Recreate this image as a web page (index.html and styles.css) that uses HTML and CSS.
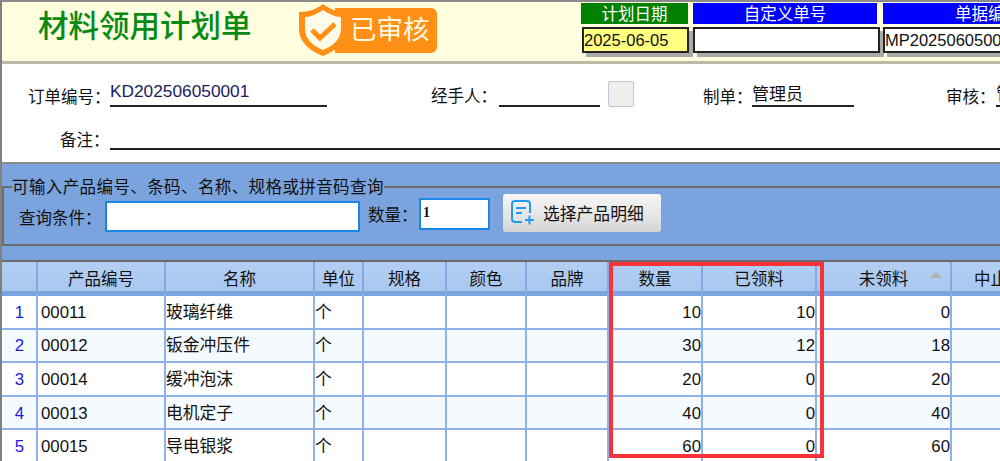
FILE: index.html
```html
<!DOCTYPE html>
<html lang="zh-CN">
<head>
<meta charset="utf-8">
<title>材料领用计划单</title>
<link rel="stylesheet" href="styles.css">
</head>
<body>
<div class="page">
  <header class="top">
    <h1 class="title">材料领用计划单</h1>
    <div class="badge">
      <svg class="shield" width="48" height="52" viewBox="0 0 48 52">
        <path d="M24 0C18 5 9 8 0 8V25C0 38 11 47 24 52C37 47 48 38 48 25V8C39 8 30 5 24 0Z" fill="#ff9015"/>
        <path d="M24 6C18 10 12 13 6 13V25C6 35 14 42 24 46C34 42 42 35 42 25V13C36 13 30 10 24 6Z" fill="#fffbe8"/>
        <path d="M13 26L21 34L36 20" fill="none" stroke="#ff9015" stroke-width="5"/>
      </svg>
      <span class="badge-text">已审核</span>
    </div>
    <div class="meta">
      <div class="meta-col date">
        <div class="meta-label green">计划日期</div>
        <div class="meta-box yellow">2025-06-05</div>
      </div>
      <div class="meta-col custom">
        <div class="meta-label">自定义单号</div>
        <div class="meta-box"></div>
      </div>
      <div class="meta-col docno">
        <div class="meta-label">单据编号</div>
        <div class="meta-box">MP202506050001</div>
      </div>
    </div>
  </header>

  <section class="form">
    <div class="form-row first">
      <span class="lbl lbl-order">订单编号：</span>
      <span class="val val-order">KD202506050001</span>
      <span class="lbl lbl-handler">经手人：</span>
      <span class="val val-handler"></span>
      <span class="check"></span>
      <span class="lbl lbl-maker">制单：</span>
      <span class="val val-maker">管理员</span>
      <span class="lbl lbl-audit">审核：</span>
      <span class="val val-audit">管理员</span>
    </div>
    <div class="form-row second">
      <span class="lbl lbl-note">备注：</span>
      <span class="val val-note"></span>
    </div>
  </section>

  <section class="search">
    <fieldset class="search-set">
      <legend class="search-legend">可输入产品编号、条码、名称、规格或拼音码查询</legend>
      <div class="search-row">
        <span class="lbl">查询条件：</span>
        <span class="field field-query"></span>
        <span class="lbl lbl-qty">数量：</span>
        <span class="field field-qty">1</span>
        <button class="pick" type="button">
          <svg width="24" height="26" viewBox="0 0 24 26" fill="none" stroke="#1f9bf0" stroke-width="2">
            <path d="M11 22H4C2 22 1 21 1 19V4C1 2 2 1 4 1H16C18 1 19 2 19 4V13"/>
            <path d="M5 8H15M5 13H11M14 20H23M18.5 15.500V24.500"/>
          </svg>
          <span>选择产品明细</span>
        </button>
      </div>
    </fieldset>
  </section>

  <div class="grid-wrap">
    <table class="grid">
      <colgroup>
        <col class="c0"><col class="c1"><col class="c2"><col class="c3"><col class="c4"><col class="c5"><col class="c6"><col class="c7"><col class="c8"><col class="c9"><col class="c10">
      </colgroup>
      <thead>
        <tr><th></th><th>产品编号</th><th>名称</th><th>单位</th><th>规格</th><th>颜色</th><th>品牌</th><th>数量</th><th>已领料</th><th class="sorted">未领料<i class="tri"></i></th><th>中止数量</th></tr>
      </thead>
      <tbody>
        <tr><td class="idx">1</td><td class="code">00011</td><td>玻璃纤维</td><td>个</td><td></td><td></td><td></td><td class="num">10</td><td class="num">10</td><td class="num">0</td><td></td></tr>
        <tr><td class="idx">2</td><td class="code">00012</td><td>钣金冲压件</td><td>个</td><td></td><td></td><td></td><td class="num">30</td><td class="num">12</td><td class="num">18</td><td></td></tr>
        <tr><td class="idx">3</td><td class="code">00014</td><td>缓冲泡沫</td><td>个</td><td></td><td></td><td></td><td class="num">20</td><td class="num">0</td><td class="num">20</td><td></td></tr>
        <tr><td class="idx">4</td><td class="code">00013</td><td>电机定子</td><td>个</td><td></td><td></td><td></td><td class="num">40</td><td class="num">0</td><td class="num">40</td><td></td></tr>
        <tr><td class="idx">5</td><td class="code">00015</td><td>导电银浆</td><td>个</td><td></td><td></td><td></td><td class="num">60</td><td class="num">0</td><td class="num">60</td><td></td></tr>
      </tbody>
    </table>
    <div class="red-box"></div>
  </div>
</div>
</body>
</html>
```
FILE: styles.css
```css
* { box-sizing: border-box; }
html, body { margin: 0; padding: 0; background: #fff; }
body { font-family: "Liberation Sans", "Noto Sans CJK SC", sans-serif; font-size: 16.500px; color: #111; }
.page { width: 1000px; height: 461px; overflow: hidden; border-left: 2px solid #808080; border-top: 2px solid #8a8a8a; display: flex; flex-direction: column; }

.top { height: 62px; flex: none; background: #ffffe0; border-bottom: 3px solid #bdb9a6; display: flex; align-items: flex-start; position: relative; }
.title { margin: 5px 0 2px 36px; width: 261px; flex: none; font-size: 30.500px; line-height: 38px; font-weight: 500; color: #0a8a14; white-space: nowrap; }
.badge { display: flex; align-items: center; margin-top: 2px; width: 138px; height: 52px; flex: none; }
.shield { flex: none; position: relative; z-index: 1; }
.badge-text { margin-left: -12px; height: 45px; width: 102px; flex: none; background: #ff9015; color: #fff8e0; border-radius: 0 6px 6px 0; font-size: 26.500px; line-height: 45px; padding-left: 15px; white-space: nowrap; }
.meta { margin-left: 144px; margin-top: 1px; display: flex; flex: none; }
.meta-col { flex: none; }
.date { width: 112px; }
.custom { width: 190px; }
.docno { width: 210px; }
.date .meta-label { width: 107px; }
.custom .meta-label { width: 184px; }
.meta-label { height: 21px; background: #0000ff; color: #fff; font-size: 16.500px; line-height: 23px; text-align: center; overflow: hidden; }
.meta-label.green { background: #008000; }
.meta-box { margin-top: 3px; height: 26px; background: #fff; border: 2px solid #222; box-shadow: 4px 4px 0 #aaa; font-size: 16.500px; line-height: 22px; color: #111; white-space: nowrap; overflow: hidden; }
.date .meta-box { margin-left: 1px; width: 107px; }
.custom .meta-box { width: 187px; }
.meta-box.yellow { background: #ffff80; }

.form { height: 100px; flex: none; border-bottom: 2px solid #8a8a8a; background: #fff; }
.form-row { display: flex; align-items: flex-end; white-space: nowrap; }
.first { height: 43px; }
.second { height: 43px; }
.lbl { flex: none; color: #111; }
.val { flex: none; border-bottom: 2px solid #222; height: 27px; line-height: 22px; }
.lbl-order { margin-left: 26px; width: 82px; line-height: 20px; }
.val-order { width: 217px; font-size: 17.300px; color: #1a2060; line-height: 22px; }
.lbl-handler { margin-left: 104px; width: 68px; line-height: 22px; }
.val-handler { width: 101px; }
.check { width: 26px; height: 26px; margin-left: 8px; background: #efefec; border: 1px solid #bcc8d8; border-radius: 2px; flex: none; }
.lbl-maker { margin-left: 69px; width: 49px; line-height: 20px; }
.val-maker { width: 102px; line-height: 30px; font-size: 17px; }
.lbl-audit { margin-left: 92px; width: 50px; line-height: 20px; }
.val-audit { width: 60px; line-height: 30px; font-size: 17px; }
.lbl-note { margin-left: 58px; width: 50px; line-height: 20px; }
.val-note { flex: 1; }

.search { height: 96px; flex: none; background: #7ba3dd; padding-top: 12px; }
.search-set { margin: 0 -2px 0 0; width: 1020px; padding: 0 0 0 15px; height: 70px; border: 2px solid #6b6b6b; border-right: 0; border-radius: 0; min-width: 0; }
.search-legend { padding: 0; margin-left: -7px; font-size: 16.500px; line-height: 22px; letter-spacing: 0.400px; color: #111; }
.search-row { display: flex; align-items: flex-start; margin-top: -3px; }
.search-row .lbl { margin-top: 11px; line-height: 24px; width: 86px; }
.field { flex: none; display: block; background: #fff; border: 2px solid #1a87e6; }
.field-query { width: 255px; height: 31px; margin-top: 6px; }
.search-row .lbl-qty { width: 51px; margin-left: 8px; margin-top: 8px; }
.field-qty { width: 71px; height: 32px; margin-top: 3px; border-color: #1a87e6; font-family: "Liberation Serif", serif; font-weight: 700; font-size: 14px; line-height: 26px; padding-left: 2px; }
.pick { flex: none; margin-left: 13px; margin-top: -1px; width: 158px; height: 38px; padding: 0 0 0 8px; border: 0; border-radius: 3px; background: linear-gradient(#f6f6f6, #e6e6e6 55%, #d4d4d4); display: flex; align-items: center; gap: 8px; font: inherit; font-size: 16.800px; color: #111; white-space: nowrap; }

.grid-wrap { flex: none; position: relative; border-top: 2px solid #6b6b6b; background: #fff; height: 220px; }
.grid { table-layout: fixed; width: 1062px; border-collapse: separate; border-spacing: 0; }
.c0 { width: 36px; }
.c1 { width: 128px; }
.c2 { width: 149px; }
.c3 { width: 49px; }
.c4 { width: 83px; }
.c5 { width: 80px; }
.c6 { width: 82px; }
.c7 { width: 94px; }
.c8 { width: 114px; }
.c9 { width: 135px; }
.c10 { width: 112px; }
.grid th { height: 34px; padding: 0; background: linear-gradient(#b2cef3, #a9c8f0) no-repeat top / 100% 29px, #7ba3dd; border-right: 2px solid #85a9e4; font-weight: 400; font-size: 16.500px; line-height: 24px; text-align: center; white-space: nowrap; overflow: hidden; color: #111; }
.grid td { height: 33.600px; padding: 2px 0 0 0; border-right: 2px solid #8fb1ec; border-bottom: 2px solid #8fb1ec; font-size: 16.800px; line-height: 24px; white-space: nowrap; overflow: hidden; color: #111; }
.grid td.code { padding-left: 3px; }
.grid tbody tr:nth-child(even) td { background: #f5fafe; }
.grid td.idx { text-align: center; color: #1a1ae0; background: #fff; padding-left: 1px; }
.grid td.num { text-align: right; padding-right: 0; }
.sorted { position: relative; }
.tri { position: absolute; right: 8px; top: 10px; width: 0; height: 0; border-left: 6px solid transparent; border-right: 6px solid transparent; border-bottom: 6px solid #b5aeaa; }
.red-box { position: absolute; left: 607px; top: 0; width: 215px; height: 196px; border: 4px solid #f73339; pointer-events: none; }
```
